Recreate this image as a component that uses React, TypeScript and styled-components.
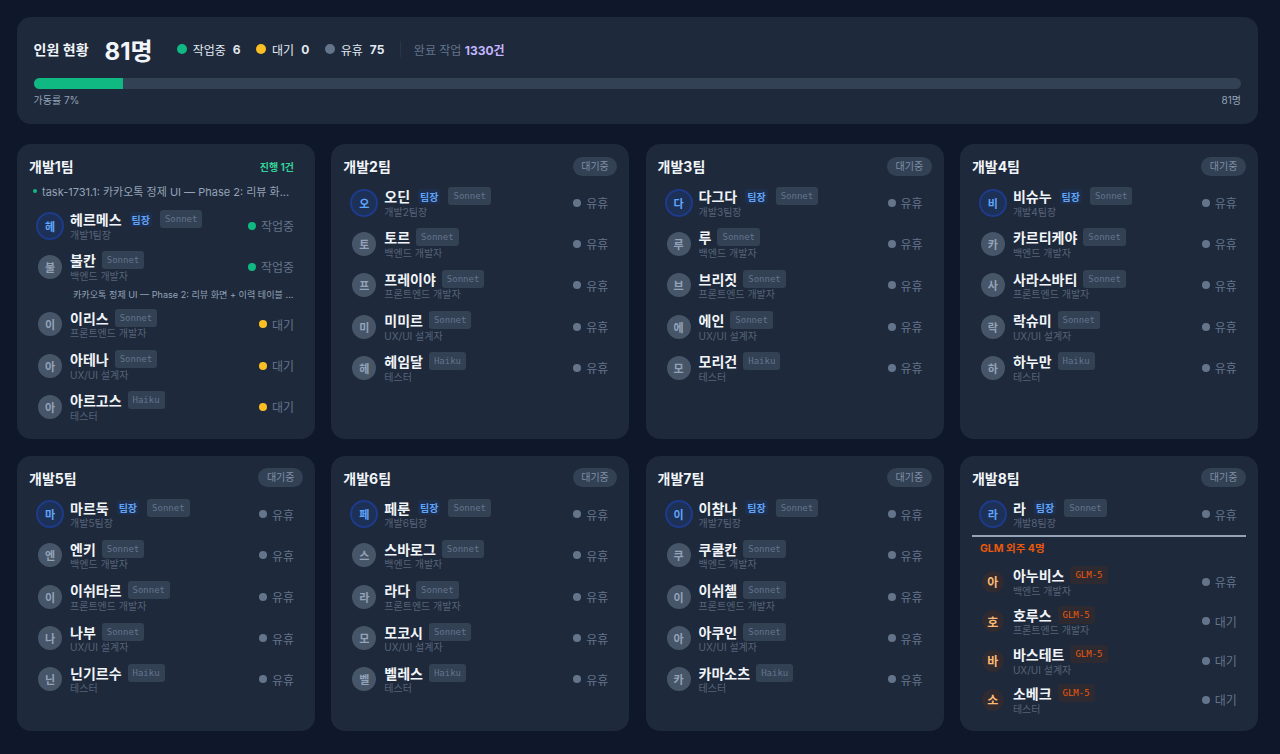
import React from 'react'
import styled, { createGlobalStyle } from 'styled-components'

type Status = 'work' | 'wait' | 'rest'

type Member = {
  name: string
  role: string
  model: string
  lead?: boolean
  status: Status
  task?: string
}

type Team = {
  name: string
  running?: string
  task?: string
  members: Member[]
  glm?: Member[]
}

const STATUS_COLOR: Record<Status, string> = {
  work: '#10b981',
  wait: '#fbbf24',
  rest: '#64748b',
}

const STATUS_LABEL: Record<Status, string> = {
  work: '작업중',
  wait: '대기',
  rest: '유휴',
}

const FONT = `Inter, 'Noto Sans CJK KR', sans-serif`

const GlobalStyle = createGlobalStyle`
  html, body {
    margin: 0;
    height: 754px;
    overflow: hidden;
    background: #0f172a;
  }
  * {
    box-sizing: border-box;
  }
`

const Page = styled.div`
  width: 1280px;
  height: 754px;
  overflow: hidden;
  padding: 17px 22px 0 17px;
  font-family: ${FONT};
  color: #f1f5f9;
  background: #0f172a;
`

const Summary = styled.section`
  height: 107px;
  padding: 16px 17px 16px 16.5px;
  border-radius: 14px;
  background: #1e293b;
`

const SummaryRow = styled.div`
  display: flex;
  align-items: center;
  height: 32px;
`

const SummaryTitle = styled.span`
  font-size: 14px;
  font-weight: 600;
  margin-right: 16px;
`

const SummaryCount = styled.span`
  font-size: 24px;
  font-weight: 700;
  margin-right: 24px;
`

const Legend = styled.span`
  display: flex;
  align-items: center;
  font-size: 12px;
  color: #e2e8f0;
  margin-right: 15.5px;
`

const LegendDot = styled.i<{ $status: Status }>`
  width: 10px;
  height: 10px;
  border-radius: 50%;
  margin-right: 6px;
  background: ${({ $status }) => STATUS_COLOR[$status]};
`

const LegendValue = styled.b`
  font-weight: 700;
  margin-left: 7px;
`

const Separator = styled.i`
  width: 1px;
  height: 16px;
  background: #293548;
  margin-right: 13px;
`

const Completed = styled.span`
  font-size: 12px;
  color: #64748b;
`

const CompletedValue = styled.b`
  font-weight: 700;
  color: #c4b5fd;
`

const Track = styled.div`
  height: 10.5px;
  margin-top: 13px;
  border-radius: 6px;
  overflow: hidden;
  background: #334155;
`

const Fill = styled.div`
  height: 100%;
  background: #10b981;
`

const TrackLabels = styled.div`
  display: flex;
  justify-content: space-between;
  margin-top: 4px;
  font-size: 10px;
  line-height: 15px;
  color: #94a3b8;
`

const Grid = styled.div`
  display: grid;
  grid-template-columns: repeat(4, 298px);
  grid-template-rows: 295px 275.5px;
  column-gap: 16.3px;
  row-gap: 16.5px;
  margin-top: 20px;
`

const Card = styled.section`
  padding: 12px 12px 0;
  border-radius: 14px;
  background: #1e293b;
`

const CardHeader = styled.div`
  display: flex;
  align-items: center;
  justify-content: space-between;
  height: 20px;
  margin-bottom: 6px;
`

const CardTitle = styled.h3`
  margin: 0;
  font-size: 14px;
  font-weight: 700;
  color: #f1f5f9;
`

const RunningBadge = styled.span`
  padding: 0 9px 0 0;
  font-size: 10px;
  font-weight: 700;
  color: #34d399;
`

const IdleBadge = styled.span`
  height: 19px;
  padding: 0 8.5px;
  border-radius: 10px;
  font-size: 10px;
  line-height: 19px;
  color: #8090a6;
  background: #334155;
`

const TaskLine = styled.div`
  display: flex;
  align-items: center;
  height: 18px;
  margin-bottom: 5px;
  font-size: 11px;
  color: #94a3b8;
`

const TaskDot = styled.i`
  flex: none;
  width: 4px;
  height: 4px;
  margin: 0 5px 0 4px;
  border-radius: 50%;
  background: #10b981;
`

const MemberList = styled.div`
  display: flex;
  flex-direction: column;
`

const Row = styled.div`
  display: flex;
  align-items: center;
  height: 41.3px;
  padding: 0 9px 0 7px;
`

const AvatarSlot = styled.div`
  display: flex;
  align-items: center;
  justify-content: center;
  flex: none;
  width: 28px;
  margin-right: 6px;
`

const Avatar = styled.div<{ $lead?: boolean; $glm?: boolean }>`
  display: flex;
  align-items: center;
  justify-content: center;
  width: ${({ $lead, $glm }) => ($lead ? 28 : $glm ? 22 : 24)}px;
  height: ${({ $lead, $glm }) => ($lead ? 28 : $glm ? 22 : 24)}px;
  border-radius: 50%;
  font-size: ${({ $glm }) => ($glm ? 12 : 11)}px;
  font-weight: 700;
  color: ${({ $lead, $glm }) => ($glm ? '#fdba74' : $lead ? '#60a5fa' : '#94a3b8')};
  background: ${({ $lead, $glm }) => ($glm ? '#302a31' : $lead ? '#1d3156' : '#475569')};
  border: ${({ $lead }) => ($lead ? '2px solid #1e3a8a' : 'none')};
`

const MemberInfo = styled.div`
  flex: 1;
  min-width: 0;
`

const NameLine = styled.div`
  display: flex;
  align-items: center;
  height: 19px;
`

const MemberName = styled.span`
  font-size: 14px;
  font-weight: 600;
  color: #f1f5f9;
`

const LeadTag = styled.span`
  margin-left: 8px;
  padding: 0 2px;
  border-radius: 3px;
  font-size: 10px;
  font-weight: 700;
  color: #60a5fa;
  background: #1e2f4d;
`

const ModelTag = styled.span<{ $glm?: boolean; $lead?: boolean }>`
  height: 18px;
  margin-left: ${({ $lead }) => ($lead ? 8 : 6)}px;
  padding: 0 5px;
  border-radius: 3px;
  font-family: 'DejaVu Sans Mono', monospace;
  font-size: 9px;
  line-height: 18px;
  color: ${({ $glm }) => ($glm ? '#ea580c' : '#64748b')};
  background: ${({ $glm }) => ($glm ? '#2e2a31' : '#334155')};
`

const MemberRole = styled.div`
  height: 13px;
  font-size: 10px;
  line-height: 13px;
  color: #566479;
  white-space: nowrap;
`

const MemberStatus = styled.div`
  display: flex;
  align-items: center;
  flex: none;
  font-size: 12px;
  color: #64748b;
`

const StatusDot = styled.i<{ $status: Status }>`
  width: 8px;
  height: 8px;
  margin-right: 5px;
  border-radius: 50%;
  background: ${({ $status }) => STATUS_COLOR[$status]};
`

const MemberTask = styled.div`
  height: 16px;
  padding-left: 44px;
  font-size: 9.1px;
  line-height: 14px;
  color: #94a3b8;
  white-space: nowrap;
`

const GlmDivider = styled.div`
  height: 2px;
  margin-top: 0.5px;
  background: #94a3b8;
`

const GlmLabel = styled.div`
  height: 22px;
  padding-left: 8px;
  font-size: 10.5px;
  font-weight: 700;
  line-height: 24px;
  color: #ea580c;
`

const GlmList = styled.div`
  display: flex;
  flex-direction: column;
  margin-top: 3px;
`

const GlmRow = styled(Row)`
  height: 39.3px;
`

const crew = (
  n: number,
  lead: string,
  rest: [string, string, string, string],
  model: Status = 'rest'
): Member[] => [
  { name: lead, role: `개발${n}팀장`, model: 'Sonnet', lead: true, status: model },
  { name: rest[0], role: '백엔드 개발자', model: 'Sonnet', status: model },
  { name: rest[1], role: '프론트엔드 개발자', model: 'Sonnet', status: model },
  { name: rest[2], role: 'UX/UI 설계자', model: 'Sonnet', status: model },
  { name: rest[3], role: '테스터', model: 'Haiku', status: model },
]

const TEAMS: Team[] = [
  {
    name: '개발1팀',
    running: '진행 1건',
    task: 'task-1731.1: 카카오톡 정제 UI — Phase 2: 리뷰 화...',
    members: [
      { name: '헤르메스', role: '개발1팀장', model: 'Sonnet', lead: true, status: 'work' },
      {
        name: '불칸',
        role: '백엔드 개발자',
        model: 'Sonnet',
        status: 'work',
        task: '카카오톡 정제 UI — Phase 2: 리뷰 화면 + 이력 테이블 ...',
      },
      { name: '이리스', role: '프론트엔드 개발자', model: 'Sonnet', status: 'wait' },
      { name: '아테나', role: 'UX/UI 설계자', model: 'Sonnet', status: 'wait' },
      { name: '아르고스', role: '테스터', model: 'Haiku', status: 'wait' },
    ],
  },
  { name: '개발2팀', members: crew(2, '오딘', ['토르', '프레이야', '미미르', '헤임달']) },
  { name: '개발3팀', members: crew(3, '다그다', ['루', '브리짓', '에인', '모리건']) },
  { name: '개발4팀', members: crew(4, '비슈누', ['카르티케야', '사라스바티', '락슈미', '하누만']) },
  { name: '개발5팀', members: crew(5, '마르둑', ['엔키', '이쉬타르', '나부', '닌기르수']) },
  { name: '개발6팀', members: crew(6, '페룬', ['스바로그', '라다', '모코시', '벨레스']) },
  { name: '개발7팀', members: crew(7, '이참나', ['쿠쿨칸', '이쉬첼', '아쿠인', '카마소츠']) },
  {
    name: '개발8팀',
    members: [{ name: '라', role: '개발8팀장', model: 'Sonnet', lead: true, status: 'rest' }],
    glm: [
      { name: '아누비스', role: '백엔드 개발자', model: 'GLM-5', status: 'rest' },
      { name: '호루스', role: '프론트엔드 개발자', model: 'GLM-5', status: 'wait' },
      { name: '바스테트', role: 'UX/UI 설계자', model: 'GLM-5', status: 'wait' },
      { name: '소베크', role: '테스터', model: 'GLM-5', status: 'wait' },
    ],
  },
]

const MemberBody: React.FC<{ member: Member; glm?: boolean; dim?: boolean }> = ({
  member,
  glm,
  dim,
}) => (
  <>
    <AvatarSlot>
      <Avatar $lead={member.lead} $glm={glm}>
        {member.name[0]}
      </Avatar>
    </AvatarSlot>
    <MemberInfo>
      <NameLine>
        <MemberName>{member.name}</MemberName>
        {member.lead && <LeadTag>팀장</LeadTag>}
        <ModelTag $glm={glm} $lead={member.lead}>
          {member.model}
        </ModelTag>
      </NameLine>
      <MemberRole>{member.role}</MemberRole>
    </MemberInfo>
    <MemberStatus>
      <StatusDot $status={dim ? 'rest' : member.status} />
      {STATUS_LABEL[member.status]}
    </MemberStatus>
  </>
)

const TeamCard: React.FC<{ team: Team }> = ({ team }) => (
  <Card>
    <CardHeader>
      <CardTitle>{team.name}</CardTitle>
      {team.running ? (
        <RunningBadge>{team.running}</RunningBadge>
      ) : (
        <IdleBadge>대기중</IdleBadge>
      )}
    </CardHeader>
    {team.task && (
      <TaskLine>
        <TaskDot />
        {team.task}
      </TaskLine>
    )}
    <MemberList>
      {team.members.map(member => (
        <React.Fragment key={member.name}>
          <Row>
            <MemberBody member={member} />
          </Row>
          {member.task && <MemberTask>{member.task}</MemberTask>}
        </React.Fragment>
      ))}
    </MemberList>
    {team.glm && (
      <>
        <GlmDivider />
        <GlmLabel>GLM 외주 {team.glm.length}명</GlmLabel>
        <GlmList>
          {team.glm.map(member => (
            <GlmRow key={member.name}>
              <MemberBody member={member} glm dim />
            </GlmRow>
          ))}
        </GlmList>
      </>
    )}
  </Card>
)

const App: React.FC = () => (
  <Page>
    <GlobalStyle />
    <Summary>
      <SummaryRow>
        <SummaryTitle>인원 현황</SummaryTitle>
        <SummaryCount>81명</SummaryCount>
        <Legend>
          <LegendDot $status="work" />
          작업중<LegendValue>6</LegendValue>
        </Legend>
        <Legend>
          <LegendDot $status="wait" />
          대기<LegendValue>0</LegendValue>
        </Legend>
        <Legend>
          <LegendDot $status="rest" />
          유휴<LegendValue>75</LegendValue>
        </Legend>
        <Separator />
        <Completed>
          완료 작업 <CompletedValue>1330건</CompletedValue>
        </Completed>
      </SummaryRow>
      <Track>
        <Fill style={{ width: `${(6 / 81) * 100}%` }} />
      </Track>
      <TrackLabels>
        <span>가동률 7%</span>
        <span>81명</span>
      </TrackLabels>
    </Summary>
    <Grid>
      {TEAMS.map(team => (
        <TeamCard key={team.name} team={team} />
      ))}
    </Grid>
  </Page>
)

export default App
